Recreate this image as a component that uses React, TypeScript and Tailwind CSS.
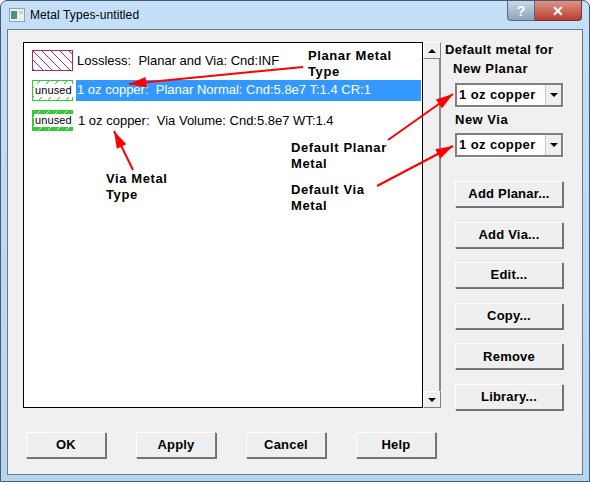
const UI_FONT = "font-['Liberation_Sans',Arial,sans-serif]";

const SIDE_BUTTONS = ["Add Planar...", "Add Via...", "Edit...", "Copy...", "Remove", "Library..."];
const BOTTOM_BUTTONS = ["OK", "Apply", "Cancel", "Help"];

function HatchSwatch({ id, color, filled, flip, label }: { id: string; color: string; filled?: boolean; flip?: boolean; label?: string }) {
  const stroke = filled ? "#ffffff" : color;
  return (
    <div className="relative h-[21px] w-[41px] shrink-0">
      <svg width="41" height="21" className="block">
        <defs>
          <pattern id={id} width="9" height="9" patternUnits="userSpaceOnUse">
            {flip ? (
              <path d="M-1 10L10 -1M-1 1L1 -1M8 10L10 8" stroke={stroke} strokeWidth="1" />
            ) : (
              <path d="M-1 -1L10 10M-1 8L1 10M8 -1L10 1" stroke={stroke} strokeWidth="1" />
            )}
          </pattern>
        </defs>
        <rect x="0" y="0" width="41" height="21" fill={filled ? color : "#ffffff"} />
        <rect x="0.5" y="0.5" width="40" height="20" fill={`url(#${id})`} stroke={color} />
      </svg>
      {label && (
        <span className="absolute left-[2px] top-[4px] bg-white px-px text-[11px] leading-[13px] tracking-[0.1px] text-black">{label}</span>
      )}
    </div>
  );
}

function RaisedButton({ label }: { label: string }) {
  return (
    <button
      type="button"
      className="flex h-[26px] w-full items-center justify-center border border-t-white border-l-white border-r-[#7a7a7a] border-b-[#7a7a7a] bg-[#efefef] text-[13px] font-bold tracking-[0.2px] text-black shadow-[1px_1px_0_#6e6e6e]"
    >
      {label}
    </button>
  );
}

function MetalSelect() {
  return (
    <div className="flex h-[24px] w-[108px] items-center border-2 border-[#808080] bg-white shadow-[1px_1px_0_#ffffff]">
      <span className="flex-1 pl-[2px] text-[13px] font-bold tracking-[0.4px] text-black">1 oz copper</span>
      <div className="flex h-full w-[16px] items-center justify-center border-l border-[#c8c8c8] bg-[#efefef]">
        <div className="h-0 w-0 border-x-[4px] border-t-[4px] border-x-transparent border-t-black" />
      </div>
    </div>
  );
}

function ScrollArrow({ up }: { up?: boolean }) {
  return (
    <div className="flex h-[17px] items-center justify-center border border-t-white border-l-white border-r-[#808080] border-b-[#808080] bg-[#efefef]">
      <div
        className={
          up
            ? "h-0 w-0 border-x-[4px] border-b-[4px] border-x-transparent border-b-black"
            : "h-0 w-0 border-x-[4px] border-t-[4px] border-x-transparent border-t-black"
        }
      />
    </div>
  );
}

function Note({ className, lines }: { className: string; lines: string[] }) {
  return (
    <div className={`absolute text-[13px] font-bold leading-[16px] tracking-[0.6px] text-black ${className}`}>
      {lines.map((line) => (
        <div key={line}>{line}</div>
      ))}
    </div>
  );
}

function Arrow({ x1, y1, x2, y2 }: { x1: number; y1: number; x2: number; y2: number }) {
  const angle = Math.atan2(y2 - y1, x2 - x1);
  const len = 18;
  const spread = 0.3;
  const a = `${x2 - len * Math.cos(angle - spread)},${y2 - len * Math.sin(angle - spread)}`;
  const b = `${x2 - len * Math.cos(angle + spread)},${y2 - len * Math.sin(angle + spread)}`;
  return (
    <g>
      <line x1={x1} y1={y1} x2={x2} y2={y2} stroke="#ff0000" strokeWidth="2" />
      <polygon points={`${x2},${y2} ${a} ${b}`} fill="#ff0000" />
    </g>
  );
}

export default function App() {
  return (
    <div className={`relative flex h-[482px] w-[590px] flex-col overflow-hidden rounded-t-[7px] border border-[#4a5a6a] bg-gradient-to-b from-[#c4e0f8] to-[#b4d4f0] ${UI_FONT}`}>
      {/* title bar */}
      <div className="flex h-[28px] shrink-0 items-center pl-[8px] pr-[7px]">
        <svg width="16" height="14" className="mr-[5px] shrink-0">
          <rect x="0.5" y="0.5" width="15" height="13" fill="#e8eeee" stroke="#9aa6a6" />
          <rect x="2" y="3" width="6" height="8" fill="#4f8f84" />
          <rect x="10" y="3" width="4" height="3" fill="#c9d4d4" />
        </svg>
        <span className="text-[12px] tracking-[0.1px] text-black">Metal Types-untitled</span>
        <div className="ml-auto flex h-[20px] self-start">
          <div className="flex w-[28px] items-center justify-center rounded-bl-[4px] border border-t-0 border-[#5a6a7a] bg-gradient-to-b from-[#c8d8e8] to-[#8aa4bc] text-[14px] font-bold leading-none text-white">?</div>
          <div className="flex w-[47px] items-center justify-center rounded-br-[4px] border border-l-0 border-t-0 border-[#6a3a3a] bg-gradient-to-b from-[#dc9488] to-[#b83a2c] text-[14px] font-bold leading-none text-white">✕</div>
        </div>
      </div>

      {/* client area */}
      <div className="mx-[6px] mb-[6px] flex min-h-0 flex-1 flex-col border border-[#6a7a88] bg-[#f0f0f0] pl-[15px] pt-[12px]">
        <div className="flex h-[366px]">
          <div className="flex w-[400px] shrink-0 flex-col gap-[9px] border border-black bg-white pl-[8px] pr-[1px] pt-[7px] text-[13px]">
            <div className="flex items-center gap-[3px]">
              <HatchSwatch id="hatch-lossless" color="#b0285c" />
              <span className="whitespace-pre pl-px text-black">Lossless:  Planar and Via: Cnd:INF</span>
            </div>
            <div className="flex items-center gap-[3px]">
              <HatchSwatch id="hatch-planar" color="#33cc33" flip label="unused" />
              <span className="h-[21px] flex-1 whitespace-pre bg-[#3399ff] pl-px leading-[20px] text-white">1 oz copper:  Planar Normal: Cnd:5.8e7 T:1.4 CR:1</span>
            </div>
            <div className="flex items-center gap-[3px]">
              <HatchSwatch id="hatch-via" color="#33cc33" filled flip label="unused" />
              <span className="whitespace-pre pl-[2px] text-black">1 oz copper:  Via Volume: Cnd:5.8e7 WT:1.4</span>
            </div>
          </div>

          <div className="flex w-[18px] shrink-0 flex-col bg-[#f4f4f4]">
            <ScrollArrow up />
            <div className="flex-1 border-r-2 border-[#8a8a8a] bg-[#f0f0f0]" />
            <ScrollArrow />
          </div>

          <div className="ml-[4px] flex w-[130px] flex-col">
            <div className="text-[13px] font-bold leading-[16px] tracking-[0.35px] text-black">Default metal for</div>
            <div className="mt-[3px] pl-[8px] text-[13px] font-bold leading-[16px] tracking-[0.5px] text-black">New Planar</div>
            <div className="ml-[10px] mt-[6px]"><MetalSelect /></div>
            <div className="mt-[5px] pl-[10px] text-[13px] font-bold leading-[16px] tracking-[0.5px] text-black">New Via</div>
            <div className="ml-[10px] mt-[5px]"><MetalSelect /></div>
            <div className="ml-[10px] mt-[24px] flex w-[108px] flex-col gap-[14.6px]">
              {SIDE_BUTTONS.map((label) => (
                <RaisedButton key={label} label={label} />
              ))}
            </div>
          </div>
        </div>

        <div className="ml-[3px] mt-[24px] flex gap-[30px]">
          {BOTTOM_BUTTONS.map((label) => (
            <div key={label} className="w-[80px]">
              <RaisedButton label={label} />
            </div>
          ))}
        </div>
      </div>

      {/* red annotations drawn over the dialog */}
      <svg width="590" height="482" className="pointer-events-none absolute -left-px -top-px">
        <Arrow x1={303} y1={67} x2={129} y2={84} />
        <Arrow x1={133} y1={170} x2={114} y2={131} />
        <Arrow x1={388} y1={140} x2={453} y2={94} />
        <Arrow x1={377} y1={186} x2={453} y2={146} />
      </svg>
      <Note className="left-[307px] top-[47px]" lines={["Planar Metal", "Type"]} />
      <Note className="left-[105px] top-[170px]" lines={["Via Metal", "Type"]} />
      <Note className="left-[290px] top-[139px]" lines={["Default Planar", "Metal"]} />
      <Note className="left-[290px] top-[181px]" lines={["Default Via", "Metal"]} />
    </div>
  );
}
